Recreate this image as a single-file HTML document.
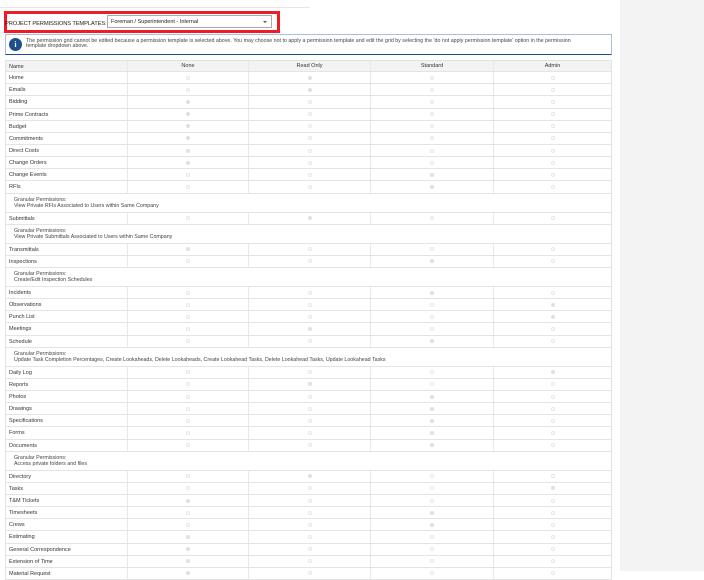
<!DOCTYPE html>
<html><head><meta charset="utf-8"><style>
*{box-sizing:border-box;margin:0;padding:0}
body{width:704px;height:571px;overflow:hidden;background:#fff;font-family:"Liberation Sans",sans-serif;color:#333;position:relative}
.side{position:absolute;left:620px;top:0;width:84px;height:571px;background:#f3f3f3}
.topline{position:absolute;left:0;top:7px;width:310px;height:1px;background:#e6e6e6}
.red{position:absolute;left:4px;top:11px;width:276px;height:22px;border:3px solid #ee1c24}
.lbl{position:absolute;left:5px;top:21px;font-size:5.8px;color:#222;letter-spacing:-.15px}
.sel{position:absolute;left:107px;top:15px;width:165px;height:13px;border:1px solid #aaa;font-size:5.5px;padding:3px 3px;color:#222}
.sel:after{content:"";position:absolute;right:4px;top:5px;border:2px solid transparent;border-top:2.5px solid #555}
.info{position:absolute;left:5px;top:34px;width:607px;height:21px;border:1px solid #a9c0dc;border-bottom:1.5px solid #1b4f8a;font-size:5.3px;color:#444;padding:4px 0 0 20px;line-height:5px}
.ic{position:absolute;left:3px;top:3px;width:13px;height:13px;border-radius:50%;background:#1c4f8c;color:#fff;font-size:8px;font-weight:bold;text-align:center;line-height:13px;font-family:"Liberation Serif",serif}
.tbl{position:absolute;left:5px;top:60px;width:607px;border-left:1px solid #e2e2e2;border-right:1px solid #e2e2e2}
.r{display:flex;height:12.15px;border-bottom:1px solid #e4e4e4;font-size:5.5px;align-items:center}
.r>div{height:100%;display:flex;align-items:center;justify-content:center;border-left:1px solid #e8e8e8}
.r>div:first-child{width:121px;justify-content:flex-start;padding-left:3px;border-left:none;padding-top:1px}
.r>div:nth-child(2){width:121px}.r>div:nth-child(3){width:122px}.r>div:nth-child(4){width:123px}.r>div:nth-child(5){flex:1}
.h{background:#f3f3f3;border-top:1px solid #e2e2e2}
.o{width:4px;height:4px;border-radius:50%;border:.6px solid #e6e6e6}
.x{width:4px;height:4px;border-radius:50%;background:#e0e0e0}
.g{height:19px;border-bottom:1px solid #e4e4e4;font-size:5.3px;padding:3px 0 0 8px;line-height:6px;color:#444}
</style></head><body>
<div class="topline"></div>
<div class="red"></div>
<div class="lbl">PROJECT PERMISSIONS TEMPLATES:</div>
<div class="sel">Foreman / Superintendent - Internal</div>
<div class="info"><div class="ic">i</div>The permission grid cannot be edited because a permission template is selected above. You may choose not to apply a permission template and edit the grid by selecting the 'do not apply permission template' option in the permission<br>template dropdown above.</div>
<div class="side"></div>
<div class="tbl">
<div class="r h"><div>Name</div><div>None</div><div>Read Only</div><div>Standard</div><div>Admin</div></div>
<div class="r"><div>Home</div><div><i class="o"></i></div><div><i class="x"></i></div><div><i class="o"></i></div><div><i class="o"></i></div></div>
<div class="r"><div>Emails</div><div><i class="o"></i></div><div><i class="x"></i></div><div><i class="o"></i></div><div><i class="o"></i></div></div>
<div class="r"><div>Bidding</div><div><i class="x"></i></div><div><i class="o"></i></div><div><i class="o"></i></div><div><i class="o"></i></div></div>
<div class="r"><div>Prime Contracts</div><div><i class="x"></i></div><div><i class="o"></i></div><div><i class="o"></i></div><div><i class="o"></i></div></div>
<div class="r"><div>Budget</div><div><i class="x"></i></div><div><i class="o"></i></div><div><i class="o"></i></div><div><i class="o"></i></div></div>
<div class="r"><div>Commitments</div><div><i class="x"></i></div><div><i class="o"></i></div><div><i class="o"></i></div><div><i class="o"></i></div></div>
<div class="r"><div>Direct Costs</div><div><i class="x"></i></div><div><i class="o"></i></div><div><i class="o"></i></div><div><i class="o"></i></div></div>
<div class="r"><div>Change Orders</div><div><i class="x"></i></div><div><i class="o"></i></div><div><i class="o"></i></div><div><i class="o"></i></div></div>
<div class="r"><div>Change Events</div><div><i class="o"></i></div><div><i class="o"></i></div><div><i class="x"></i></div><div><i class="o"></i></div></div>
<div class="r"><div>RFIs</div><div><i class="o"></i></div><div><i class="o"></i></div><div><i class="x"></i></div><div><i class="o"></i></div></div>
<div class="g">Granular Permissions:<br>View Private RFIs Associated to Users within Same Company</div>
<div class="r"><div>Submittals</div><div><i class="o"></i></div><div><i class="x"></i></div><div><i class="o"></i></div><div><i class="o"></i></div></div>
<div class="g">Granular Permissions:<br>View Private Submittals Associated to Users within Same Company</div>
<div class="r"><div>Transmittals</div><div><i class="x"></i></div><div><i class="o"></i></div><div><i class="o"></i></div><div><i class="o"></i></div></div>
<div class="r"><div>Inspections</div><div><i class="o"></i></div><div><i class="o"></i></div><div><i class="x"></i></div><div><i class="o"></i></div></div>
<div class="g">Granular Permissions:<br>Create/Edit Inspection Schedules</div>
<div class="r"><div>Incidents</div><div><i class="o"></i></div><div><i class="o"></i></div><div><i class="x"></i></div><div><i class="o"></i></div></div>
<div class="r"><div>Observations</div><div><i class="o"></i></div><div><i class="o"></i></div><div><i class="o"></i></div><div><i class="x"></i></div></div>
<div class="r"><div>Punch List</div><div><i class="o"></i></div><div><i class="o"></i></div><div><i class="o"></i></div><div><i class="x"></i></div></div>
<div class="r"><div>Meetings</div><div><i class="o"></i></div><div><i class="x"></i></div><div><i class="o"></i></div><div><i class="o"></i></div></div>
<div class="r"><div>Schedule</div><div><i class="o"></i></div><div><i class="o"></i></div><div><i class="x"></i></div><div><i class="o"></i></div></div>
<div class="g">Granular Permissions:<br>Update Task Completion Percentages, Create Lookaheads, Delete Lookaheads, Create Lookahead Tasks, Delete Lookahead Tasks, Update Lookahead Tasks</div>
<div class="r"><div>Daily Log</div><div><i class="o"></i></div><div><i class="o"></i></div><div><i class="o"></i></div><div><i class="x"></i></div></div>
<div class="r"><div>Reports</div><div><i class="o"></i></div><div><i class="x"></i></div><div><i class="o"></i></div><div><i class="o"></i></div></div>
<div class="r"><div>Photos</div><div><i class="o"></i></div><div><i class="o"></i></div><div><i class="x"></i></div><div><i class="o"></i></div></div>
<div class="r"><div>Drawings</div><div><i class="o"></i></div><div><i class="o"></i></div><div><i class="x"></i></div><div><i class="o"></i></div></div>
<div class="r"><div>Specifications</div><div><i class="o"></i></div><div><i class="o"></i></div><div><i class="x"></i></div><div><i class="o"></i></div></div>
<div class="r"><div>Forms</div><div><i class="o"></i></div><div><i class="o"></i></div><div><i class="x"></i></div><div><i class="o"></i></div></div>
<div class="r"><div>Documents</div><div><i class="o"></i></div><div><i class="o"></i></div><div><i class="x"></i></div><div><i class="o"></i></div></div>
<div class="g">Granular Permissions:<br>Access private folders and files</div>
<div class="r"><div>Directory</div><div><i class="o"></i></div><div><i class="x"></i></div><div><i class="o"></i></div><div><i class="o"></i></div></div>
<div class="r"><div>Tasks</div><div><i class="o"></i></div><div><i class="o"></i></div><div><i class="o"></i></div><div><i class="x"></i></div></div>
<div class="r"><div>T&amp;M Tickets</div><div><i class="x"></i></div><div><i class="o"></i></div><div><i class="o"></i></div><div><i class="o"></i></div></div>
<div class="r"><div>Timesheets</div><div><i class="o"></i></div><div><i class="o"></i></div><div><i class="x"></i></div><div><i class="o"></i></div></div>
<div class="r"><div>Crews</div><div><i class="o"></i></div><div><i class="o"></i></div><div><i class="x"></i></div><div><i class="o"></i></div></div>
<div class="r"><div>Estimating</div><div><i class="x"></i></div><div><i class="o"></i></div><div><i class="o"></i></div><div><i class="o"></i></div></div>
<div class="r"><div>General Correspondence</div><div><i class="x"></i></div><div><i class="o"></i></div><div><i class="o"></i></div><div><i class="o"></i></div></div>
<div class="r"><div>Extension of Time</div><div><i class="x"></i></div><div><i class="o"></i></div><div><i class="o"></i></div><div><i class="o"></i></div></div>
<div class="r"><div>Material Request</div><div><i class="x"></i></div><div><i class="o"></i></div><div><i class="o"></i></div><div><i class="o"></i></div></div>
</div>
</body></html>
